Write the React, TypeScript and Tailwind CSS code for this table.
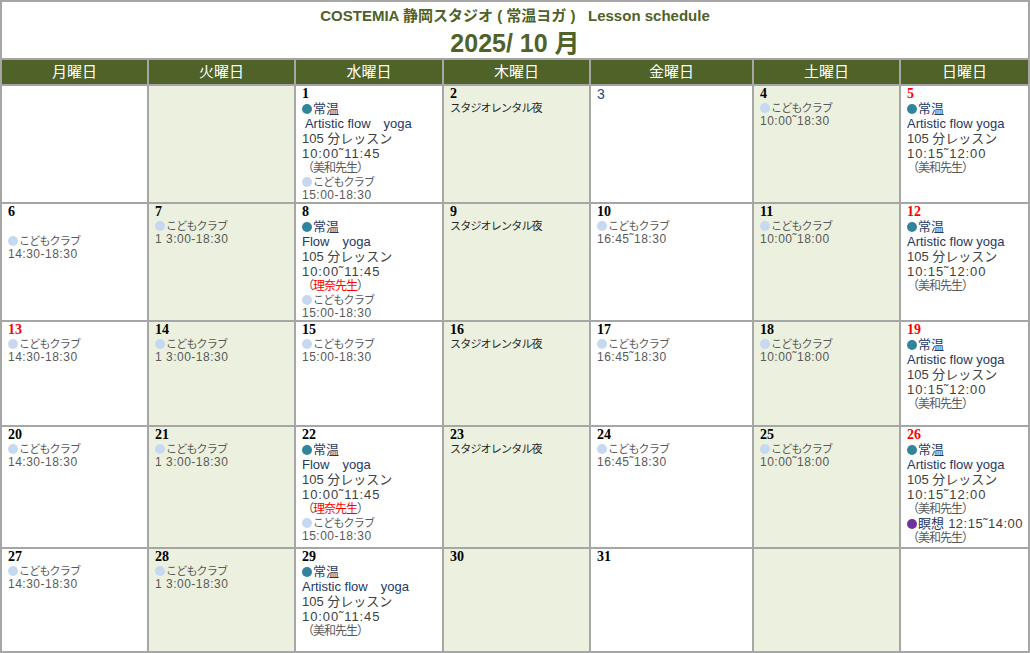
import type { ReactNode } from 'react'

const jp = "font-['Liberation_Sans','Noto_Sans_CJK_JP',sans-serif]"

function Num({ n, tone = 'black' }: { n: number; tone?: 'black' | 'red' | 'blue' }) {
  if (tone === 'blue') {
    return <div className="font-['Liberation_Sans',sans-serif] text-[14px] leading-[14px] text-[#1f497d] pt-[1px]">{n}</div>
  }
  return (
    <div
      className={`font-['Liberation_Serif',serif] font-bold text-[14px] leading-[14px] pt-[1px] ${
        tone === 'red' ? 'text-[#ff0000]' : 'text-black'
      }`}
    >
      {n}
    </div>
  )
}

function Dot({ kind }: { kind: 'teal' | 'kids' | 'purple' }) {
  const color = kind === 'teal' ? 'bg-[#31849b]' : kind === 'kids' ? 'bg-[#c6d9f1]' : 'bg-[#7030a0]'
  return <span className={`inline-block w-[10px] h-[10px] rounded-full mr-[1px] align-[-1px] ${color}`} />
}

function Kids({ time }: { time: string }) {
  return (
    <>
      <div className="text-[11px] leading-[14px] text-[#595959] tracking-[-0.8px] whitespace-nowrap">
        <Dot kind="kids" />
        こどもクラブ
      </div>
      <div className="text-[12px] leading-[13px] text-[#595959] tracking-[0.5px] whitespace-pre">{time}</div>
    </>
  )
}

function Teacher({ name, red }: { name: string; red?: boolean }) {
  return (
    <div className="text-[12px] leading-[14px] text-[#595959] tracking-[-1px] whitespace-nowrap">
      （<span className={red ? 'text-[#ff0000]' : ''}>{name}</span>）
    </div>
  )
}

function Joon({ title, time, teacher, red }: { title: string; time: string; teacher: string; red?: boolean }) {
  return (
    <>
      <div className="text-[13px] leading-[15px] text-[#1f3864] whitespace-nowrap">
        <Dot kind="teal" />
        常温
      </div>
      <div className="text-[13px] leading-[15px] text-[#1f3864] whitespace-pre">{title}</div>
      <div className="text-[13px] leading-[15px] text-[#404040] whitespace-nowrap">105 分レッスン</div>
      <div className="text-[13px] leading-[15px] text-[#404040] tracking-[0.9px] whitespace-nowrap">{time}</div>
      <Teacher name={teacher} red={red} />
    </>
  )
}

function Rental() {
  return <div className="text-[11px] leading-[14px] text-[#262626] tracking-[-0.8px] whitespace-nowrap">スタジオレンタル夜</div>
}

function Cell({ shade, children }: { shade?: boolean; children?: ReactNode }) {
  return <div className={`pl-[6px] overflow-hidden ${jp} ${shade ? 'bg-[#ebf1de]' : 'bg-white'}`}>{children}</div>
}

const days = ['月曜日', '火曜日', '水曜日', '木曜日', '金曜日', '土曜日', '日曜日']

export default function App() {
  return (
    <div className={`w-[1030px] h-[653px] border-2 border-[#a6a6a6] bg-white flex flex-col ${jp}`}>
      <div className="h-[56px] flex flex-col items-center text-[#4f6228] font-bold">
        <div className="text-[15px] leading-[18px] mt-[5px] whitespace-pre">COSTEMIA 静岡スタジオ ( 常温ヨガ )   Lesson schedule</div>
        <div className="text-[25px] leading-[30px] mt-[3px] whitespace-pre">2025/ 10 月</div>
      </div>
      <div className="flex-1 border-t-2 border-[#a6a6a6] bg-[#a6a6a6] grid grid-cols-[145px_145px_146px_145px_161px_145px_127px] grid-rows-[24px_116px_116px_103px_120px_102px] gap-[2px]">
        {days.map((d) => (
          <div key={d} className="bg-[#4f6228] text-white text-[15px] leading-[24px] text-center">
            {d}
          </div>
        ))}

        {/* week 1 */}
        <Cell />
        <Cell shade />
        <Cell>
          <Num n={1} />
          <Joon title=" Artistic flow　yoga" time="10:00˜11:45" teacher="美和先生" />
          <Kids time="15:00-18:30" />
        </Cell>
        <Cell shade>
          <Num n={2} />
          <Rental />
        </Cell>
        <Cell>
          <Num n={3} tone="blue" />
        </Cell>
        <Cell shade>
          <Num n={4} />
          <Kids time="10:00˜18:30" />
        </Cell>
        <Cell>
          <Num n={5} tone="red" />
          <Joon title="Artistic flow yoga" time="10:15˜12:00" teacher="美和先生" />
        </Cell>

        {/* week 2 */}
        <Cell>
          <Num n={6} />
          <div className="h-[15px]" />
          <Kids time="14:30-18:30" />
        </Cell>
        <Cell shade>
          <Num n={7} />
          <Kids time="1 3:00-18:30" />
        </Cell>
        <Cell>
          <Num n={8} />
          <Joon title="Flow　yoga" time="10:00˜11:45" teacher="理奈先生" red />
          <Kids time="15:00-18:30" />
        </Cell>
        <Cell shade>
          <Num n={9} />
          <Rental />
        </Cell>
        <Cell>
          <Num n={10} />
          <Kids time="16:45˜18:30" />
        </Cell>
        <Cell shade>
          <Num n={11} />
          <Kids time="10:00˜18:00" />
        </Cell>
        <Cell>
          <Num n={12} tone="red" />
          <Joon title="Artistic flow yoga" time="10:15˜12:00" teacher="美和先生" />
        </Cell>

        {/* week 3 */}
        <Cell>
          <Num n={13} tone="red" />
          <Kids time="14:30-18:30" />
        </Cell>
        <Cell shade>
          <Num n={14} />
          <Kids time="1 3:00-18:30" />
        </Cell>
        <Cell>
          <Num n={15} />
          <Kids time="15:00-18:30" />
        </Cell>
        <Cell shade>
          <Num n={16} />
          <Rental />
        </Cell>
        <Cell>
          <Num n={17} />
          <Kids time="16:45˜18:30" />
        </Cell>
        <Cell shade>
          <Num n={18} />
          <Kids time="10:00˜18:00" />
        </Cell>
        <Cell>
          <Num n={19} tone="red" />
          <Joon title="Artistic flow yoga" time="10:15˜12:00" teacher="美和先生" />
        </Cell>

        {/* week 4 */}
        <Cell>
          <Num n={20} />
          <Kids time="14:30-18:30" />
        </Cell>
        <Cell shade>
          <Num n={21} />
          <Kids time="1 3:00-18:30" />
        </Cell>
        <Cell>
          <Num n={22} />
          <Joon title="Flow　yoga" time="10:00˜11:45" teacher="理奈先生" red />
          <Kids time="15:00-18:30" />
        </Cell>
        <Cell shade>
          <Num n={23} />
          <Rental />
        </Cell>
        <Cell>
          <Num n={24} />
          <Kids time="16:45˜18:30" />
        </Cell>
        <Cell shade>
          <Num n={25} />
          <Kids time="10:00˜18:00" />
        </Cell>
        <Cell>
          <Num n={26} tone="red" />
          <Joon title="Artistic flow yoga" time="10:15˜12:00" teacher="美和先生" />
          <div className="text-[13px] leading-[15px] whitespace-nowrap">
            <Dot kind="purple" />
            <span className="text-[#1f3864]">瞑想</span>
            <span className="text-[#404040] tracking-[0.5px]"> 12:15˜14:00</span>
          </div>
          <Teacher name="美和先生" />
        </Cell>

        {/* week 5 */}
        <Cell>
          <Num n={27} />
          <Kids time="14:30-18:30" />
        </Cell>
        <Cell shade>
          <Num n={28} />
          <Kids time="1 3:00-18:30" />
        </Cell>
        <Cell>
          <Num n={29} />
          <Joon title="Artistic flow　yoga" time="10:00˜11:45" teacher="美和先生" />
        </Cell>
        <Cell shade>
          <Num n={30} />
        </Cell>
        <Cell>
          <Num n={31} />
        </Cell>
        <Cell shade />
        <Cell />
      </div>
    </div>
  )
}
